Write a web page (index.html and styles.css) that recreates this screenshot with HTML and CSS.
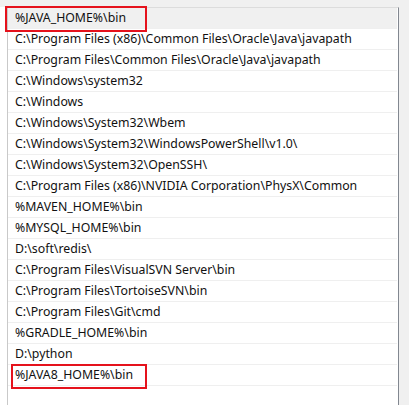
FILE: index.html
```html
<!DOCTYPE html>
<html lang="en">

<head>
  <meta charset="UTF-8">
  <meta name="viewport" content="width=device-width, initial-scale=1.0">
  <link rel="stylesheet" href="styles.css">
  <title>Path</title>
</head>

<body>
  <div class="frame">
    <div class="gutter"></div>
    <ul class="pathList">
      <li class="row selected">%JAVA_HOME%\bin</li>
      <li class="row">C:\Program Files (x86)\Common Files\Oracle\Java\javapath</li>
      <li class="row">C:\Program Files\Common Files\Oracle\Java\javapath</li>
      <li class="row">C:\Windows\system32</li>
      <li class="row">C:\Windows</li>
      <li class="row">C:\Windows\System32\Wbem</li>
      <li class="row">C:\Windows\System32\WindowsPowerShell\v1.0\</li>
      <li class="row">C:\Windows\System32\OpenSSH\</li>
      <li class="row">C:\Program Files (x86)\NVIDIA Corporation\PhysX\Common</li>
      <li class="row">%MAVEN_HOME%\bin</li>
      <li class="row">%MYSQL_HOME%\bin</li>
      <li class="row">D:\soft\redis\</li>
      <li class="row">C:\Program Files\VisualSVN Server\bin</li>
      <li class="row">C:\Program Files\TortoiseSVN\bin</li>
      <li class="row">C:\Program Files\Git\cmd</li>
      <li class="row">%GRADLE_HOME%\bin</li>
      <li class="row">D:\python</li>
      <li class="row">%JAVA8_HOME%\bin</li>
    </ul>
  </div>
  <!-- red annotation boxes -->
  <div class="mark markTop"></div>
  <div class="mark markBottom"></div>
</body>

</html>
```

FILE: styles.css
```css
html,
body {
  margin: 0;
  padding: 0;
}

body {
  width: 409px;
  height: 405px;
  overflow: hidden;
  background-color: #f0f0f0;
  font-family: "Noto Sans", "Liberation Sans", sans-serif;
  font-size: 12.3px;
  color: #111;
  position: relative;
}

.frame {
  display: flex;
  margin-top: 7px;
  height: 398px;
}

.gutter {
  width: 7px;
  background-color: #fff;
}

.pathList {
  list-style: none;
  margin: 0;
  padding: 0 1px 0 0;
  width: 389px;
  background-color: #fff;
  border-top: 1px solid #dcdcdc;
  border-left: 1px solid #c9c9c9;
  border-right: 1px solid #828790;
}

.row {
  height: 20px;
  line-height: 20px;
  padding-left: 7px;
  border-bottom: 1px solid #efefef;
  white-space: nowrap;
}

.selected {
  background-color: #f0f0f0;
}

.mark {
  position: absolute;
  border: 2px solid #e5121c;
  box-sizing: border-box;
}

.markTop {
  left: 5px;
  top: 6px;
  width: 142px;
  height: 26px;
}

.markBottom {
  left: 11px;
  top: 364px;
  width: 136px;
  height: 25px;
}
```
